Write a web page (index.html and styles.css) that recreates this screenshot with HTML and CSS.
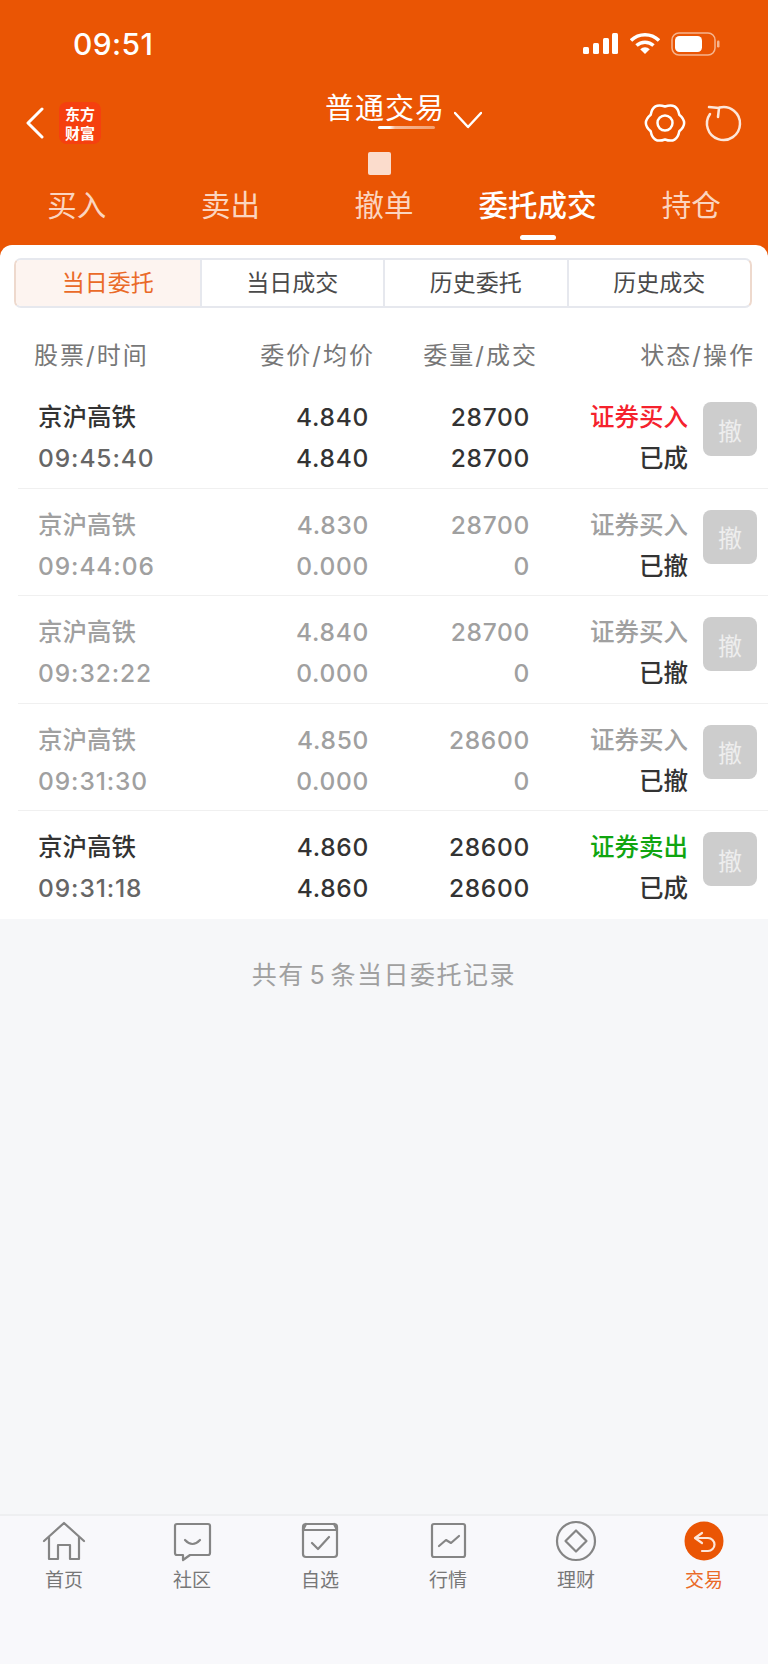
FILE: index.html
```html
<!DOCTYPE html>
<html lang="zh-CN">

<head>
    <meta charset="UTF-8">
    <title>委托成交</title>
    <link rel="stylesheet" href="styles.css">
</head>

<body>
    <header class="top">
        <div class="status-bar">
            <span class="clock">09:51</span>
            <div class="status-icons">
                <svg class="ico-signal" width="36" height="24" viewBox="0 0 36 24">
                    <rect x="0" y="15" width="6" height="7" rx="1.5" />
                    <rect x="10" y="11" width="6" height="11" rx="1.5" />
                    <rect x="20" y="6" width="6" height="16" rx="1.5" />
                    <rect x="29" y="1" width="6" height="21" rx="1.5" />
                </svg>
                <svg class="ico-wifi" width="30" height="24" viewBox="0 0 30 24">
                    <path d="M1 8.5a20 20 0 0 1 28 0" />
                    <path d="M6.5 13.5a12.5 12.5 0 0 1 17 0" />
                    <path class="wifi-dot" d="M15 22l-4.800-4.800a7 7 0 0 1 9.600 0z" />
                </svg>
                <svg class="ico-battery" width="50" height="24" viewBox="0 0 50 24">
                    <rect class="batt-frame" x="1" y="1" width="43" height="22" rx="7" />
                    <rect class="batt-fill" x="4" y="4" width="27" height="16" rx="4.500" />
                    <rect class="batt-tip" x="46" y="8.500" width="2.500" height="7" rx="1.200" />
                </svg>
            </div>
        </div>

        <nav class="nav-bar">
            <div class="nav-left">
                <svg class="ico-back" width="18" height="32" viewBox="0 0 18 32">
                    <path d="M16 2L2 16l14 14" />
                </svg>
                <div class="logo"><span>东方</span><span>财富</span></div>
            </div>
            <div class="nav-title">
                <span>普通交易</span>
                <svg class="ico-down" width="28" height="18" viewBox="0 0 28 18">
                    <path d="M1 2l13 14L27 2" />
                </svg>
            </div>
            <div class="nav-right">
                <svg class="ico-line" width="44" height="44" viewBox="0 0 44 44">
                    <path d="M22 5.500Q34 1.200 36.300 13.750Q46 22 36.300 30.250Q34 42.800 22 38.500Q10 42.800 7.700 30.250Q-2 22 7.700 13.750Q10 1.200 22 5.500z" />
                    <circle cx="22" cy="22" r="7.500" />
                </svg>
                <svg class="ico-line ico-refresh" width="44" height="44" viewBox="0 0 44 44">
                    <path d="M17.500 6.500A16.500 16.500 0 1 1 8 13" />
                    <path d="M7 6l10 1-1 9" />
                </svg>
            </div>
            <i class="smudge-line"></i>
            <i class="smudge-box"></i>
        </nav>

        <div class="main-tabs">
            <a>买入</a>
            <a>卖出</a>
            <a>撤单</a>
            <a class="active">委托成交</a>
            <a>持仓</a>
        </div>
    </header>

    <main class="sheet">
        <div class="sub-tabs">
            <a class="active">当日委托</a>
            <a>当日成交</a>
            <a>历史委托</a>
            <a>历史成交</a>
        </div>

        <div class="table-head">
            <span>股票/时间</span>
            <span>委价/均价</span>
            <span>委量/成交</span>
            <span>状态/操作</span>
        </div>

        <div class="order filled">
            <div class="cell-name"><b>京沪高铁</b><b class="time">09:45:40</b></div>
            <div class="cell num"><b>4.840</b><b>4.840</b></div>
            <div class="cell num"><b>28700</b><b>28700</b></div>
            <div class="cell"><b class="red">证券买入</b><b class="state">已成</b></div>
            <button class="btn-cancel">撤</button>
        </div>
        <div class="order">
            <div class="cell-name"><b>京沪高铁</b><b class="time">09:44:06</b></div>
            <div class="cell num"><b>4.830</b><b>0.000</b></div>
            <div class="cell num"><b>28700</b><b>0</b></div>
            <div class="cell"><b>证券买入</b><b class="state">已撤</b></div>
            <button class="btn-cancel">撤</button>
        </div>
        <div class="order">
            <div class="cell-name"><b>京沪高铁</b><b class="time">09:32:22</b></div>
            <div class="cell num"><b>4.840</b><b>0.000</b></div>
            <div class="cell num"><b>28700</b><b>0</b></div>
            <div class="cell"><b>证券买入</b><b class="state">已撤</b></div>
            <button class="btn-cancel">撤</button>
        </div>
        <div class="order">
            <div class="cell-name"><b>京沪高铁</b><b class="time">09:31:30</b></div>
            <div class="cell num"><b>4.850</b><b>0.000</b></div>
            <div class="cell num"><b>28600</b><b>0</b></div>
            <div class="cell"><b>证券买入</b><b class="state">已撤</b></div>
            <button class="btn-cancel">撤</button>
        </div>
        <div class="order filled last">
            <div class="cell-name"><b>京沪高铁</b><b class="time">09:31:18</b></div>
            <div class="cell num"><b>4.860</b><b>4.860</b></div>
            <div class="cell num"><b>28600</b><b>28600</b></div>
            <div class="cell"><b class="green">证券卖出</b><b class="state">已成</b></div>
            <button class="btn-cancel">撤</button>
        </div>
    </main>

    <p class="summary">共有 5 条当日委托记录</p>

    <footer class="bottom-nav">
        <a>
            <svg width="44" height="44" viewBox="0 0 44 44">
                <path d="M2 22L22 4l20 18M7 18v22h9V26h12v14h9V18" />
            </svg>
            首页
        </a>
        <a>
            <svg width="44" height="44" viewBox="0 0 44 44">
                <path d="M7 5h31a2 2 0 0 1 2 2v27a2 2 0 0 1-2 2H20l-7 5v-5H7a2 2 0 0 1-2-2V7a2 2 0 0 1 2-2z" />
                <path d="M15 21q7.500 8 15 0" />
            </svg>
            社区
        </a>
        <a>
            <svg width="44" height="44" viewBox="0 0 44 44">
                <rect x="5" y="5" width="34" height="33" rx="3" />
                <path d="M5 11l3-6M39 11l-3-6M5 11h34M14 24l6 6 11-12" />
            </svg>
            自选
        </a>
        <a>
            <svg width="44" height="44" viewBox="0 0 44 44">
                <rect x="6" y="5" width="33" height="33" rx="2" />
                <path d="M13 27l7-6 5 3 8-7" />
            </svg>
            行情
        </a>
        <a>
            <svg width="44" height="44" viewBox="0 0 44 44">
                <circle cx="22" cy="22" r="19" />
                <path d="M22 11.500L32.500 22 22 32.500 11.500 22z" />
            </svg>
            理财
        </a>
        <a class="active">
            <svg width="44" height="44" viewBox="0 0 44 44">
                <circle class="trade-bg" cx="22" cy="22" r="19.500" />
                <path class="trade-arrow" d="M20 14l-7 5 7 5M13 19h13a6.500 6.500 0 0 1 0 13h-6" />
            </svg>
            交易
        </a>
    </footer>
</body>

</html>
```

FILE: styles.css
```css
* {
    margin: 0;
    padding: 0;
    box-sizing: border-box;
}

body {
    width: 768px;
    height: 1664px;
    display: flex;
    flex-direction: column;
    background: #f6f7f9;
    font-family: Inter, "Noto Sans CJK SC", sans-serif;
    color: #333;
    overflow: hidden;
}

/* orange header */
.top {
    height: 257px;
    background: #ea5504;
    color: white;
}

.status-bar {
    height: 88px;
    display: flex;
    justify-content: space-between;
    align-items: center;
    padding: 0 47px 0 73px;
}

.clock {
    font-size: 30px;
    font-weight: 500;
    letter-spacing: 0.4px;
}

.status-icons {
    display: flex;
    align-items: center;
    gap: 11px;
}

.ico-signal {
    fill: white;
}

.ico-wifi {
    fill: none;
    stroke: white;
    stroke-width: 3.5;
}

.ico-wifi .wifi-dot {
    fill: white;
    stroke: none;
}

.batt-frame {
    fill: none;
    stroke: #f6b48e;
    stroke-width: 1.500;
}

.batt-fill {
    fill: white;
}

.batt-tip {
    fill: #f6b48e;
}

.nav-bar {
    position: relative;
    height: 70px;
    display: flex;
    justify-content: space-between;
    align-items: center;
    padding: 0 22px 0 26px;
}

.nav-left {
    display: flex;
    align-items: center;
    gap: 15px;
}

.ico-back path,
.ico-down path {
    fill: none;
    stroke: white;
    stroke-width: 3;
    stroke-linecap: round;
    stroke-linejoin: round;
}

.ico-down path {
    stroke-width: 2.500;
}

.logo {
    width: 42px;
    height: 42px;
    border-radius: 8px;
    background: #f5400f;
    font-family: "Noto Sans CJK SC", sans-serif;
    font-size: 15px;
    font-weight: 700;
    text-align: center;
    padding-top: 2px;
}

.logo span {
    display: block;
    height: 19px;
    line-height: 19px;
}

.nav-title {
    position: absolute;
    left: 325px;
    top: -1px;
    display: flex;
    align-items: center;
    gap: 9px;
    font-size: 29px;
    line-height: 44px;
    letter-spacing: 1px;
}

.ico-down {
    margin-top: 22px;
}

.nav-right {
    display: flex;
    gap: 15px;
}

.ico-line {
    fill: none;
    stroke: white;
    stroke-width: 2.500;
    stroke-linecap: round;
    stroke-linejoin: round;
    overflow: visible;
}

.ico-refresh {
    stroke: #fde6da;
}

/* the two stray marks left over the title */
.smudge-line {
    position: absolute;
    left: 378px;
    top: 38px;
    width: 57px;
    height: 3px;
    background: linear-gradient(90deg, #fff 20%, #f7b998 30%, #f2a070);
    border-radius: 2px;
}

.smudge-box {
    position: absolute;
    left: 368px;
    top: 64px;
    width: 23px;
    height: 23px;
    background: #fbdccc;
    border-radius: 2px;
}

.main-tabs {
    display: grid;
    grid-template-columns: repeat(5, 1fr);
    height: 99px;
    padding-top: 27px;
    text-align: center;
    font-size: 29.5px;
    color: #fbd5c0;
}

.main-tabs a {
    position: relative;
    line-height: 40px;
}

.main-tabs a.active {
    color: white;
    font-weight: 500;
}

.main-tabs a.active::after {
    content: '';
    position: absolute;
    left: 50%;
    top: 50px;
    width: 36px;
    height: 5px;
    margin-left: -18px;
    border-radius: 3px;
    background: white;
}

/* white list sheet */
.sheet {
    margin-top: -12px;
    height: 674px;
    background: white;
    border-radius: 12px 12px 0 0;
    padding-top: 13px;
}

.sub-tabs {
    display: grid;
    grid-template-columns: repeat(4, 1fr);
    height: 50px;
    margin: 0 16px 0 14px;
    border: 2px solid #e6e8ee;
    border-left-color: #eed9cd;
    border-right-color: #eed9cd;
    border-radius: 7px;
    font-size: 23px;
    line-height: 46px;
    text-align: center;
    color: #4a4a4a;
}

.sub-tabs a + a {
    border-left: 2px solid #e6e8ee;
}

.sub-tabs a.active {
    background: #fdf4f0;
    color: #ea6a28;
    border-radius: 5px 0 0 5px;
}

.table-head {
    display: grid;
    grid-template-columns: 190px 151px 163px 217px;
    height: 73px;
    padding: 28px 0 0 34px;
    font-size: 24px;
    line-height: 40px;
    letter-spacing: 2px;
    color: #777;
    text-align: right;
}

.table-head span:first-child {
    text-align: left;
}

.order {
    height: 107.6px;
    margin-left: 18px;
    padding: 16px 11px 0 20px;
    display: grid;
    grid-template-columns: 190px 141px 161px 158px 69px;
    align-items: start;
    border-bottom: 1px solid #f0f0f0;
    font-size: 24.5px;
    line-height: 41px;
    color: #a0a0a0;
}

.order.last {
    border-bottom: none;
}

.order b {
    display: block;
    font-weight: 500;
}

.cell {
    text-align: right;
}

.num {
    letter-spacing: 0.7px;
}

.order.filled b {
    color: #333;
}

.order .time {
    letter-spacing: 0.9px;
}

.order.filled .time {
    color: #666;
}

.order .state {
    color: #333;
}

.order.filled .red {
    color: #f5222d;
}

.order.filled .green {
    color: #10a510;
}

.btn-cancel {
    justify-self: end;
    width: 54px;
    height: 54px;
    margin-top: 5px;
    border: none;
    border-radius: 8px;
    background: #cdcdcd;
    color: #eee;
    font-family: inherit;
    font-size: 24px;
}

.summary {
    height: 112px;
    padding-top: 34px;
    font-size: 25px;
    line-height: 44px;
    letter-spacing: 1.5px;
    word-spacing: -4px;
    text-align: center;
    color: #a0a0a0;
}

.bottom-nav {
    flex: 1;
    margin-top: auto;
    display: grid;
    grid-template-columns: repeat(6, 1fr);
    max-height: 150px;
    padding-top: 3px;
    background: #f8f8fb;
    border-top: 2px solid #eeeff1;
    font-size: 19px;
    line-height: 32px;
    text-align: center;
    color: #777;
}

.bottom-nav a {
    display: flex;
    flex-direction: column;
    align-items: center;
}

.bottom-nav svg {
    margin-bottom: 2px;
    fill: none;
    stroke: #858585;
    stroke-width: 2.200;
    stroke-linejoin: round;
    stroke-linecap: round;
}

.bottom-nav a.active {
    color: #ea6a28;
}

.bottom-nav .trade-bg {
    fill: #ea5504;
    stroke: none;
}

.bottom-nav .trade-arrow {
    stroke: #fde6da;
}
```
